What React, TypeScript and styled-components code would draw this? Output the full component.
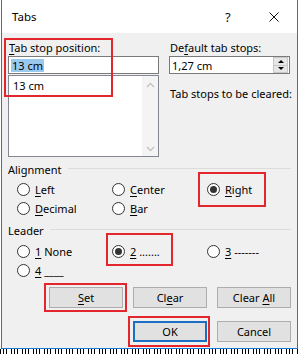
import React from 'react';
import styled, { createGlobalStyle } from 'styled-components';

/* Tabs dialog (Word) with red annotation boxes */

const GlobalStyle = createGlobalStyle`
  html, body {
    margin: 0;
    padding: 0;
    background: #ffffff;
  }
  body {
    font-family: "Noto Sans", "Liberation Sans", sans-serif;
    font-size: 11px;
    color: #000000;
  }
`;

const Screen = styled.div`
  width: 300px;
  height: 354px;
  overflow: hidden;
  background: #ffffff;
  display: flex;
  flex-direction: column;
`;

const Window = styled.div`
  margin-left: 1px;
  width: 297px;
  height: 349px;
  box-sizing: border-box;
  border: 1px solid #1c7cd5;
  border-top: none;
  display: flex;
  flex-direction: column;
  flex-shrink: 0;
`;

const TitleBar = styled.div`
  height: 33px;
  flex-shrink: 0;
  background: #ffffff;
  display: flex;
  align-items: center;
  padding-left: 10px;
`;

const Title = styled.span`
  font-size: 11.5px;
  flex: 1;
`;

const HelpGlyph = styled.span`
  font-size: 13px;
  width: 44px;
  color: #111;
`;

const CloseGlyph = styled.svg`
  width: 10px;
  height: 10px;
  margin-right: 18px;
`;

const Body = styled.div`
  flex: 1;
  background: #f0f0f0;
  padding: 7px 6px 6px 6px;
  display: flex;
  flex-direction: column;
`;

const TopRow = styled.div`
  display: flex;
  gap: 10px;
`;

const Column = styled.div<{ $w: number }>`
  position: relative;
  width: ${p => p.$w}px;
  display: flex;
  flex-direction: column;
`;

const Label = styled.div<{ $mt?: number }>`
  height: 16px;
  line-height: 16px;
  padding-left: 1px;
  margin-top: ${p => p.$mt || 0}px;
  white-space: nowrap;
`;

const TextBox = styled.div`
  height: 18px;
  box-sizing: border-box;
  border: 1px solid #7a7a7a;
  background: #ffffff;
  display: flex;
  align-items: center;
  padding-left: 2px;
`;

const Selected = styled.span`
  background: #99c9ef;
  line-height: 13px;
  padding: 0 1px;
`;

const ListBox = styled.div`
  margin-top: 1px;
  height: 82px;
  box-sizing: border-box;
  border: 1px solid #828790;
  background: #ffffff;
  display: flex;
`;

const ListItems = styled.div`
  flex: 1;
  padding: 2px 0 0 4px;
  line-height: 15px;
`;

const ScrollBar = styled.div`
  width: 16px;
  background: #f4f4f4;
  display: flex;
  flex-direction: column;
  justify-content: space-between;
  align-items: center;
  padding: 6px 0 4px;
`;

const SpinBox = styled(TextBox)`
  justify-content: space-between;
  padding-right: 1px;
`;

const SpinButtons = styled.div`
  display: flex;
  flex-direction: column;
  width: 15px;
  height: 16px;
`;

const SpinButton = styled.div<{ $up?: boolean }>`
  flex: 1;
  background: #e6e6e6;
  border: 1px solid #c8c8c8;
  ${p => (p.$up ? 'border-bottom: none;' : '')}
  display: flex;
  align-items: center;
  justify-content: center;

  &::after {
    content: '';
    border-left: 3px solid transparent;
    border-right: 3px solid transparent;
    ${p => (p.$up ? 'border-bottom: 3px solid #000;' : 'border-top: 3px solid #000;')}
  }
`;

const Group = styled.div<{ $mt: number }>`
  margin-top: ${p => p.$mt}px;
  display: flex;
  flex-direction: column;
`;

const GroupHeader = styled.div`
  height: 16px;
  display: flex;
  align-items: center;
  gap: 6px;
`;

const GroupRule = styled.div`
  flex: 1;
  height: 1px;
  background: #dcdcdc;
  margin-top: -2px;
`;

const RadioGrid = styled.div<{ $mt: number }>`
  margin-top: ${p => p.$mt}px;
  padding-left: 9px;
  display: grid;
  grid-template-columns: 95px 95px 1fr;
  grid-auto-rows: 19px;
`;

const RadioItem = styled.div`
  position: relative;
  display: flex;
  align-items: center;
  gap: 5px;
  white-space: nowrap;
`;

const RadioCircle = styled.span<{ $on?: boolean }>`
  width: 13px;
  height: 13px;
  box-sizing: border-box;
  border: 1px solid #333333;
  border-radius: 50%;
  background: #ffffff;
  display: flex;
  align-items: center;
  justify-content: center;

  &::after {
    content: '';
    width: 7px;
    height: 7px;
    border-radius: 50%;
    background: ${p => (p.$on ? '#333333' : 'transparent')};
  }
`;

const U = styled.span`
  text-decoration: underline;
  text-underline-offset: 2px;
`;

const ButtonRow = styled.div<{ $mt: number }>`
  margin-top: ${p => p.$mt}px;
  display: flex;
  justify-content: flex-end;
  gap: 10px;
`;

const Anchor = styled.div`
  position: relative;
  display: flex;
`;

const Button = styled.div<{ $focused?: boolean }>`
  width: 74px;
  height: 21px;
  box-sizing: border-box;
  background: #e1e1e1;
  border: ${p => (p.$focused ? '2px solid #1a6fc4' : '1px solid #adadad')};
  display: flex;
  align-items: center;
  justify-content: center;
`;

const Highlight = styled.span<{ $l: number; $t: number; $w: number; $h: number }>`
  position: absolute;
  left: ${p => p.$l}px;
  top: ${p => p.$t}px;
  width: ${p => p.$w}px;
  height: ${p => p.$h}px;
  box-sizing: border-box;
  border: 2px solid #e3262d;
  pointer-events: none;
`;

const Ticks = styled.div`
  height: 5px;
  background: repeating-linear-gradient(
    90deg,
    #000 0 1px,
    transparent 1px 3px,
    #000 3px 4px,
    transparent 4px 6px,
    #000 6px 7px,
    transparent 7px 11px
  );
`;

const Chevron: React.FC<{ down?: boolean }> = ({ down }) => (
  <svg width="9" height="6" viewBox="0 0 9 6">
    <path
      d={down ? 'M1 1 L4.5 4.5 L8 1' : 'M1 5 L4.5 1.5 L8 5'}
      fill="none"
      stroke="#c2c2c2"
      strokeWidth="1.3"
    />
  </svg>
);

const App: React.FC = () => (
  <Screen>
    <GlobalStyle />
    <Window>
      <TitleBar>
        <Title>Tabs</Title>
        <HelpGlyph>?</HelpGlyph>
        <CloseGlyph viewBox="0 0 10 10">
          <path d="M0.5 0.5 L9.5 9.5 M9.5 0.5 L0.5 9.5" stroke="#111" strokeWidth="1" />
        </CloseGlyph>
      </TitleBar>

      <Body>
        <TopRow>
          <Column $w={151}>
            <Label><U>T</U>ab stop position:</Label>
            <TextBox><Selected>13 cm</Selected></TextBox>
            <ListBox>
              <ListItems>13 cm</ListItems>
              <ScrollBar>
                <Chevron />
                <Chevron down />
              </ScrollBar>
            </ListBox>
            <Highlight $l={-4} $t={-2} $w={109} $h={59} />
          </Column>
          <Column $w={121}>
            <Label>De<U>f</U>ault tab stops:</Label>
            <SpinBox>
              <span>1,27 cm</span>
              <SpinButtons>
                <SpinButton $up />
                <SpinButton />
              </SpinButtons>
            </SpinBox>
            <Label $mt={12}>Tab stops to be cleared:</Label>
          </Column>
        </TopRow>

        <Group $mt={4}>
          <GroupHeader>
            <span>Alignment</span>
            <GroupRule />
          </GroupHeader>
          <RadioGrid $mt={3}>
            <RadioItem><RadioCircle /><span><U>L</U>eft</span></RadioItem>
            <RadioItem><RadioCircle /><span><U>C</U>enter</span></RadioItem>
            <RadioItem>
              <RadioCircle $on />
              <span><U>R</U>ight</span>
              <Highlight $l={-9} $t={-8} $w={68} $h={35} />
            </RadioItem>
            <RadioItem><RadioCircle /><span><U>D</U>ecimal</span></RadioItem>
            <RadioItem><RadioCircle /><span><U>B</U>ar</span></RadioItem>
          </RadioGrid>
        </Group>

        <Group $mt={4}>
          <GroupHeader>
            <span>Leader</span>
            <GroupRule />
          </GroupHeader>
          <RadioGrid $mt={4}>
            <RadioItem><RadioCircle /><span><U>1</U> None</span></RadioItem>
            <RadioItem>
              <RadioCircle $on />
              <span><U>2</U> .......</span>
              <Highlight $l={-6} $t={-9} $w={67} $h={33} />
            </RadioItem>
            <RadioItem><RadioCircle /><span><U>3</U> -------</span></RadioItem>
            <RadioItem><RadioCircle /><span><U>4</U> ____</span></RadioItem>
          </RadioGrid>
        </Group>

        <ButtonRow $mt={7}>
          <Anchor>
            <Button><span><U>S</U>et</span></Button>
            <Highlight $l={-5} $t={-4} $w={83} $h={29} />
          </Anchor>
          <Button><span>Cl<U>e</U>ar</span></Button>
          <Button><span>Clear <U>A</U>ll</span></Button>
        </ButtonRow>

        <ButtonRow $mt={13}>
          <Anchor>
            <Button $focused>OK</Button>
            <Highlight $l={-5} $t={-5} $w={82} $h={31} />
          </Anchor>
          <Button>Cancel</Button>
        </ButtonRow>
      </Body>
    </Window>
    <Ticks />
  </Screen>
);

export default App;
